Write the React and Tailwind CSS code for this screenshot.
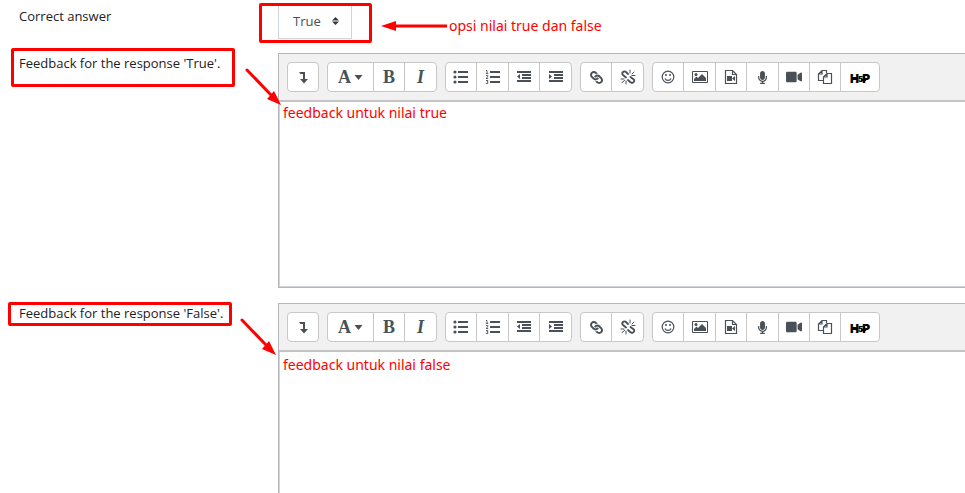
import React from "react";
import { FaLink, FaMicrophone, FaVideo } from "react-icons/fa";

const Svg = ({ children, className = "w-4 h-4" }) => (
  <svg viewBox="0 0 16 16" className={className} fill="currentColor">
    {children}
  </svg>
);

const LevelDown = () => (
  <Svg>
    <path d="M4 3h6v7h3L9 14.500 5 10h3V5H5.500z" />
  </Svg>
);

const BulletList = () => (
  <Svg>
    <circle cx="2" cy="3" r="1.600" />
    <circle cx="2" cy="8" r="1.600" />
    <circle cx="2" cy="13" r="1.600" />
    <path d="M5 2h10v2H5zM5 7h10v2H5zM5 12h10v2H5z" />
  </Svg>
);

const NumberList = () => (
  <Svg>
    <path d="M5 2h10v2H5zM5 7h10v2H5zM5 12h10v2H5z" />
    <path
      d="M1 1.500h1V4M.8 4.500h2.500M1 6.500h1.800v1.300L1 9.500h2.200M1 11.500h2l-1 1.300h.8v1.800H.8"
      fill="none"
      stroke="currentColor"
      strokeWidth=".9"
    />
  </Svg>
);

const Outdent = () => (
  <Svg>
    <path d="M1 2h14v2H1zM6 5h9v2H6zM6 8h9v2H6zM1 11h14v2H1zM4 5v5L1 7.500z" />
  </Svg>
);

const Indent = () => (
  <Svg>
    <path d="M1 2h14v2H1zM6 5h9v2H6zM6 8h9v2H6zM1 11h14v2H1zM1 5v5l3-2.500z" />
  </Svg>
);

const Unlink = () => (
  <Svg>
    <g fill="none" stroke="currentColor" strokeLinecap="round">
      <path
        d="M8 5l-2-2a2 2 0 0 0-3 3l3 2.500M8 11l2.500 2.200a2 2 0 0 0 3-3L10.500 8"
        strokeWidth="1.800"
      />
      <path d="M10 1v3M12 5l2-2M12 6.500h3M1 10h3M2 13.500l2.500-2M6 12v3" />
    </g>
  </Svg>
);

const Smile = () => (
  <Svg>
    <circle cx="8" cy="8" r="5.800" fill="none" stroke="currentColor" strokeWidth="1.200" />
    <circle cx="6" cy="6" r="1" />
    <circle cx="10" cy="6" r="1" />
    <path d="M5 9.500c1 2.500 5 2.500 6 0" fill="none" stroke="currentColor" strokeWidth="1.200" />
  </Svg>
);

const Picture = () => (
  <Svg>
    <path d="M.5 2.500h15v11H.5z" fill="none" stroke="currentColor" />
    <circle cx="4" cy="5.500" r="1.500" />
    <path d="M2 12v-2l2.500-2.500L6 9l4-4 4 4v3z" />
  </Svg>
);

const FileVideo = () => (
  <Svg>
    <path
      d="M2.500 1.500h7l4 4v9h-11zM9.500 1.500v4h4"
      fill="none"
      stroke="currentColor"
      strokeWidth="1.200"
    />
    <path d="M4 7h5v5H4zM9 9.500L12 7v5z" />
  </Svg>
);

const Files = () => (
  <Svg>
    <g fill="none" stroke="currentColor" strokeWidth="1.200">
      <path d="M6 11.500H1.500V5L5 1.500h4.500V4M5 1.500V5H1.500" />
      <path d="M6.500 8L10 4.500h4.500v10h-8zM10 4.500V8H6.500" />
    </g>
  </Svg>
);

const H5P = () => (
  <span className="relative flex items-center mt-1 font-['Inter',sans-serif] font-black text-xs text-black">
    H<span className="text-[8px] -mx-px">5</span>P
    <svg viewBox="0 0 20 12" className="absolute inset-0 w-full h-full">
      <path d="M2 6h6M11 7h5" stroke="#000" strokeWidth="2" />
    </svg>
  </span>
);

const Letter = ({ children, className = "" }) => (
  <span
    className={`font-['Liberation_Serif',serif] font-bold text-lg leading-none ${className}`}
  >
    {children}
  </span>
);

const groups = [
  [{ name: "Show more buttons", wide: "w-[30px]", icon: <LevelDown /> }],
  [
    {
      name: "Paragraph styles",
      wide: "w-[46px]",
      icon: (
        <>
          <Letter>A</Letter>
          <svg viewBox="0 0 8 5" className="w-[9px] h-[5px] ml-[3px]" fill="currentColor">
            <path d="M0 0h8L4 5z" />
          </svg>
        </>
      ),
    },
    { name: "Bold", icon: <Letter>B</Letter> },
    { name: "Italic", icon: <Letter className="italic">I</Letter> },
  ],
  [
    { name: "Unordered list", icon: <BulletList /> },
    { name: "Ordered list", wide: "w-8", icon: <NumberList /> },
    { name: "Outdent", icon: <Outdent /> },
    { name: "Indent", icon: <Indent /> },
  ],
  [
    { name: "Link", icon: <FaLink className="w-[13px] h-[13px] rotate-90" /> },
    { name: "Unlink", icon: <Unlink /> },
  ],
  [
    { name: "Emoji picker", icon: <Smile /> },
    { name: "Insert image", wide: "w-8", icon: <Picture /> },
    { name: "Insert media", icon: <FileVideo /> },
    { name: "Record audio", wide: "w-8", icon: <FaMicrophone className="w-[13px] h-[13px]" /> },
    { name: "Record video", icon: <FaVideo className="w-4 h-4" /> },
    { name: "Manage files", icon: <Files /> },
    { name: "Insert H5P", wide: "w-[38px]", icon: <H5P /> },
  ],
];

const Toolbar = () => (
  <div className="flex gap-2 h-12 px-2 pt-2 bg-[#f1f1f1] border-b-2 border-[#c4c4c7]">
    {groups.map((group, i) => (
      <div
        key={i}
        className="flex h-[30px] shrink-0 bg-white border border-[#c8c8c8] rounded divide-x divide-[#c8c8c8]"
      >
        {group.map((item) => (
          <button
            key={item.name}
            type="button"
            aria-label={item.name}
            className={`flex items-center justify-center text-[#495057] ${
              item.wide || "w-[31px]"
            }`}
          >
            {item.icon}
          </button>
        ))}
      </div>
    ))}
  </div>
);

const RedBox = ({ className }) => (
  <span
    className={`absolute border-3 border-[#ff0000] rounded-xs pointer-events-none ${className}`}
  />
);

const Arrow = ({ className }) => (
  <svg
    viewBox="0 0 36 38"
    className={`absolute w-9 h-[38px] top-[15px] pointer-events-none ${className}`}
  >
    <path d="M2 2L27 28" stroke="#f00" strokeWidth="3" strokeLinecap="round" />
    <path d="M36 37L22 31L29 23z" fill="#f00" />
  </svg>
);

const EditorRow = ({ id, label, text, box, arrow, pad }) => (
  <div className="relative flex mb-[15px]">
    <div className="w-[278px] shrink-0 pl-[19px]">
      <label htmlFor={id} className="block leading-5">
        {label}
      </label>
    </div>
    <div className="flex-1 min-w-0 border border-r-0 border-[#b5b5ba]">
      <Toolbar />
      <textarea
        id={id}
        defaultValue={text}
        className={`block w-full h-[185px] px-[3px] border-l border-b border-[#ced4da] resize-none outline-none text-[#ff0000] font-['Noto_Sans',sans-serif] text-sm leading-5 ${pad}`}
      />
    </div>
    <RedBox className={box} />
    <Arrow className={arrow} />
  </div>
);

const App = () => {
  return (
    <main className="h-screen overflow-hidden bg-white text-[#1d2125] font-['Open_Sans',sans-serif] text-[13px]">
      <div className="relative flex h-[53px]">
        <label htmlFor="answer" className="w-[278px] shrink-0 pl-[19px] pt-[6px] leading-5">
          Correct answer
        </label>
        <div className="relative mt-[5px] h-[34px] w-[74px]">
          <select
            id="answer"
            className="appearance-none w-full h-full pl-[14px] border border-[#ced4da] text-[#495057] outline-none"
          >
            <option>True</option>
            <option>False</option>
          </select>
          <svg
            viewBox="0 0 8 8"
            className="absolute right-3 top-3 w-2 h-2 pointer-events-none"
            fill="#343a40"
          >
            <path d="M0 3.500h7L3.500 0zM0 4.500h7L3.500 8z" />
          </svg>
        </div>
        <RedBox className="left-[259px] top-[3px] w-[113px] h-10" />
        <div className="flex items-center h-5 mt-4 ml-[29px] text-[#ff0000] font-['Noto_Sans',sans-serif] text-sm">
          <svg viewBox="0 0 66 10" className="w-[66px] h-[10px] mr-[2px]" fill="#f00">
            <path d="M0 5L15 0V3.500H66V6.500H15V10z" />
          </svg>
          opsi nilai true dan false
        </div>
      </div>
      <EditorRow
        id="feedback-true"
        label="Feedback for the response 'True'."
        text="feedback untuk nilai true"
        box="left-[11px] top-[-5px] w-56 h-[39px]"
        arrow="left-[245px]"
        pad="pt-px"
      />
      <EditorRow
        id="feedback-false"
        label="Feedback for the response 'False'."
        text="feedback untuk nilai false"
        box="left-2 top-[-1px] w-56 h-6"
        arrow="left-60"
        pad="pt-[3px]"
      />
    </main>
  );
};

export default App;
